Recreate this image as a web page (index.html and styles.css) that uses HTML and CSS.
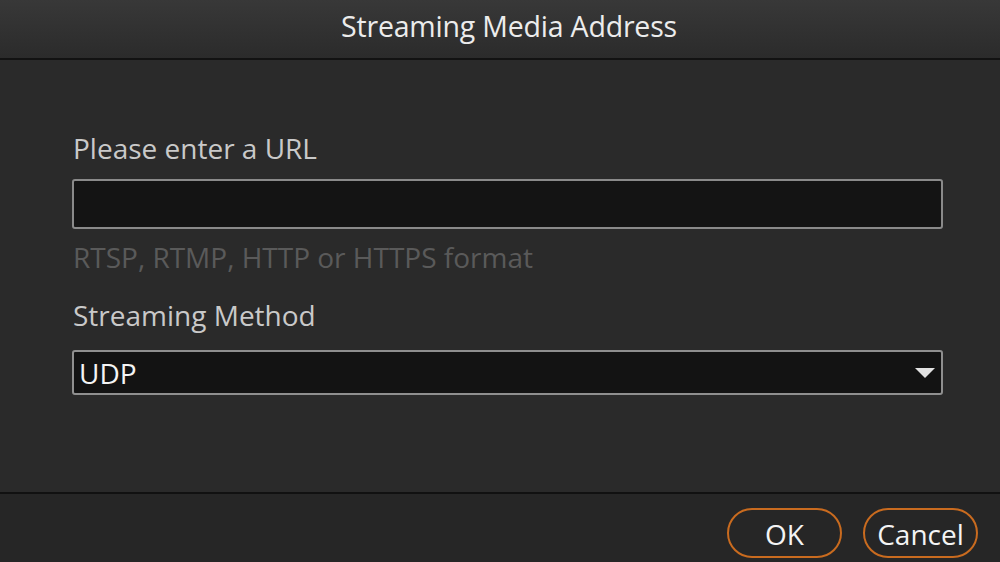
FILE: index.html
```html
<!DOCTYPE html>
<html>
<head>
<meta charset="utf-8">
<link rel="stylesheet" href="styles.css">
</head>
<body>
<div class="dialog">
  <div class="header">Streaming Media Address</div>
  <div class="content">
    <div class="label first">Please enter a URL</div>
    <div class="input"></div>
    <div class="hint">RTSP, RTMP, HTTP or HTTPS format</div>
    <div class="label second">Streaming Method</div>
    <div class="select">
      <span class="select-value">UDP</span>
      <svg class="caret" width="20" height="10" viewBox="0 0 20 10"><polygon points="0,0 20,0 10,10" fill="#e2e2e2"/></svg>
    </div>
  </div>
  <div class="footer">
    <button class="btn">OK</button>
    <button class="btn">Cancel</button>
  </div>
</div>
</body>
</html>
```
FILE: styles.css
```css
html, body {
  margin: 0;
  padding: 0;
  background: #2a2a2a;
}
.dialog {
  width: 1000px;
  height: 562px;
  display: flex;
  flex-direction: column;
  font-family: "Open Sans", "Noto Sans", sans-serif;
  background: #2a2a2a;
  overflow: hidden;
}
.header {
  display: flex;
  align-items: center;
  justify-content: center;
  background: linear-gradient(#383838, #2b2b2b);
  border-bottom: 2px solid #121212;
  color: #ececec;
  font-size: 28.5px;
  padding: 0 0 6px 18px;
  box-sizing: border-box;
  height: 60px;
  letter-spacing: -0.2px;
}
.content {
  flex: 1;
  padding: 0 57px 0 72px;
  display: flex;
  flex-direction: column;
}
.label {
  color: #c9c9c9;
  font-size: 28px;
  line-height: 30px;
  padding-left: 1px;
}
.label.first { margin-top: 73px; }
.label.second { margin-top: 28px; }
.input {
  margin-top: 16px;
  height: 50px;
  box-sizing: border-box;
  border: 2px solid #8a8a8a;
  border-radius: 3px;
  background: #141414;
}
.hint {
  margin-top: 13px;
  color: #5a5a5a;
  font-size: 28px;
  line-height: 30px;
  padding-left: 1px;
}
.select {
  margin-top: 20px;
  height: 45px;
  box-sizing: border-box;
  border: 2px solid #8f8f8f;
  border-radius: 3px;
  background: #131313;
  display: flex;
  align-items: center;
  justify-content: space-between;
  padding: 0 6px 0 5px;
}
.select-value {
  color: #f4f4f4;
  font-size: 28px;
  line-height: 30px;
}
.caret {
  display: block;
}
.footer {
  height: 70px;
  box-sizing: border-box;
  border-top: 2px solid #111;
  background: #262626;
  display: flex;
  justify-content: flex-end;
  align-items: flex-start;
  gap: 21px;
  padding: 14px 22px 0 0;
}
.btn {
  width: 115px;
  height: 50px;
  box-sizing: border-box;
  border: 2px solid #c96b1f;
  border-radius: 25px;
  background: transparent;
  color: #f4f4f4;
  font-family: "Open Sans", "Noto Sans", sans-serif;
  font-size: 28px;
  padding: 2px 0 0 0;
  line-height: 1;
}
```
